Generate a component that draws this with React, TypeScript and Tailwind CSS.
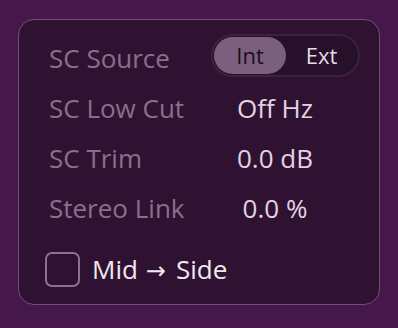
import React from "react";

const font = { fontFamily: '"Open Sans", "DejaVu Sans", sans-serif' };

function Row({ label, children }: { label: string; children: React.ReactNode }) {
  return (
    <div className="flex h-[50px] items-center">
      <div className="w-[162px] text-[26px] leading-none text-[#8a6f8d]">{label}</div>
      <div className="flex-1">{children}</div>
    </div>
  );
}

function Value({ text }: { text: string }) {
  return <div className="w-[128px] text-center text-[26px] leading-none text-[#e2d3e3]">{text}</div>;
}

export default function App() {
  return (
    <div className="h-[328px] w-[398px] bg-[#45174a] pl-[18px] pt-[19px]" style={font}>
      <div className="h-[286px] w-[362px] rounded-[16px] border border-[#6e5073] bg-[#2f1232] pl-[30px] pt-[13px]">
        <Row label="SC Source">
          <div className="-mt-[6px] flex h-[43px] w-[149px] items-center rounded-full border-2 border-[#3d2240] bg-[#26102a] px-[1px]">
            <div className="flex h-[37px] w-[72px] items-center justify-center rounded-full bg-[#7b5f7e] text-[22px] leading-none text-[#1c0c1e]">
              Int
            </div>
            <div className="flex h-[37px] flex-1 items-center justify-center text-[22px] leading-none text-[#e7dae7]">
              Ext
            </div>
          </div>
        </Row>
        <Row label="SC Low Cut">
          <Value text="Off Hz" />
        </Row>
        <Row label="SC Trim">
          <Value text="0.0 dB" />
        </Row>
        <Row label="Stereo Link">
          <Value text="0.0 %" />
        </Row>
        <div className="-ml-[4px] mt-[19px] flex items-center gap-[12px]">
          <div className="h-[35px] w-[35px] rounded-[7px] border-2 border-[#8a7290]" />
          <div className="flex items-baseline text-[26px] leading-none text-[#f0e8f0]">
            <span>Mid</span>
            <span className="ml-[8px] mr-[10px] text-[24px]" style={{ fontFamily: '"DejaVu Sans", sans-serif' }}>→</span>
            <span>Side</span>
          </div>
        </div>
      </div>
    </div>
  );
}
